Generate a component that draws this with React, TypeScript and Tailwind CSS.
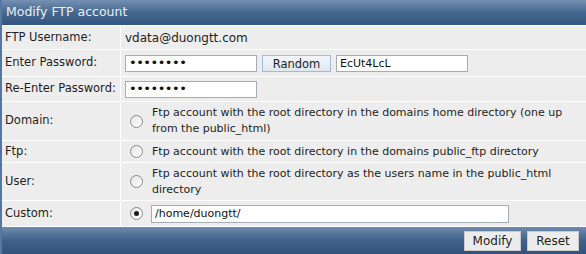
import { useState } from 'react';

const ROOT_OPTIONS = [
  {
    id: 'domain',
    label: 'Domain:',
    text: 'Ftp account with the root directory in the domains home directory (one up from the public_html)',
    height: 'h-[38px]',
  },
  {
    id: 'ftp',
    label: 'Ftp:',
    text: 'Ftp account with the root directory in the domains public_ftp directory',
    height: 'h-[21px]',
  },
  {
    id: 'user',
    label: 'User:',
    text: 'Ftp account with the root directory as the users name in the public_html directory',
    height: 'h-[37px]',
  },
];

function Radio({ checked, onClick }: { checked: boolean; onClick: () => void }) {
  return (
    <button
      type="button"
      onClick={onClick}
      className="w-[13px] h-[13px] shrink-0 rounded-full border border-[#8a8a8a] bg-gradient-to-br from-[#e4e4e4] to-white flex items-center justify-center"
    >
      {checked && <span className="w-[5px] h-[5px] rounded-full bg-[#1a1a1a]" />}
    </button>
  );
}

export default function App() {
  const [root, setRoot] = useState('custom');
  const [customPath, setCustomPath] = useState('/home/duongtt/');
  const [randomPass, setRandomPass] = useState('EcUt4LcL');

  const inputCls =
    'h-[17px] border border-[#a5acb5] bg-white px-[3px] text-[11px] text-[#111] outline-none';

  return (
    <div className="w-[586px] h-[254px] bg-white font-['Tahoma','DejaVu_Sans',sans-serif] text-[11px] text-[#1e1e1e] border-l-2 border-[#56779e] flex flex-col overflow-hidden">
      {/* Header */}
      <div className="h-[25px] shrink-0 bg-gradient-to-b from-[#7590b2] via-[#46688f] to-[#33557f] text-[#e9eff6] text-[12.5px] pl-[4px] flex items-center">
        Modify FTP account
      </div>

      <div className="flex flex-col gap-px pt-px">
        <div className="grid grid-cols-[118px_1fr] gap-px h-[23px]">
          <div className="bg-[#ededed] pl-[3px] flex items-center text-[11.5px]">FTP Username:</div>
          <div className="bg-[#ededed] pl-[4px] flex items-center text-[12px]">vdata@duongtt.com</div>
        </div>

        <div className="grid grid-cols-[118px_1fr] gap-px h-[26px]">
          <div className="bg-[#ededed] pl-[3px] flex items-center text-[11.5px]">Enter Password:</div>
          <div className="bg-[#ededed] pl-[4px] flex items-center">
            <input type="password" defaultValue="12345678" className={`${inputCls} w-[132px] text-[13px] tracking-[-0.5px]`} />
            <button
              type="button"
              onClick={() => setRandomPass(Math.random().toString(36).slice(2, 10))}
              className="ml-[5px] h-[17px] w-[69px] border border-[#9fbbd8] bg-gradient-to-b from-[#f2f6fa] to-[#dfe8f1] text-[11.5px] text-[#1e1e1e]"
            >
              Random
            </button>
            <input
              value={randomPass}
              onChange={(e) => setRandomPass(e.target.value)}
              className={`${inputCls} ml-[5px] w-[132px]`}
            />
          </div>
        </div>

        <div className="grid grid-cols-[118px_1fr] gap-px h-[24px]">
          <div className="bg-[#ededed] pl-[3px] flex items-center text-[11.5px]">Re-Enter Password:</div>
          <div className="bg-[#ededed] pl-[4px] flex items-center">
            <input type="password" defaultValue="12345678" className={`${inputCls} w-[132px] text-[13px] tracking-[-0.5px]`} />
          </div>
        </div>

        {ROOT_OPTIONS.map((opt) => (
          <div key={opt.id} className={`grid grid-cols-[118px_1fr] gap-px ${opt.height}`}>
            <div className="bg-[#ededed] pl-[3px] flex items-center text-[11.5px]">{opt.label}</div>
            <div className="bg-[#ededed] pl-[9px] flex items-center gap-[9px]">
              <Radio checked={root === opt.id} onClick={() => setRoot(opt.id)} />
              <span className="leading-[16px] pr-[8px]">{opt.text}</span>
            </div>
          </div>
        ))}

        <div className="grid grid-cols-[118px_1fr] gap-px h-[25px]">
          <div className="bg-[#ededed] pl-[3px] flex items-center text-[11.5px]">Custom:</div>
          <div className="bg-[#ededed] pl-[9px] flex items-center gap-[8px]">
            <Radio checked={root === 'custom'} onClick={() => setRoot('custom')} />
            <input
              value={customPath}
              onChange={(e) => setCustomPath(e.target.value)}
              className={`${inputCls} w-[358px] h-[18px] text-[11.5px]`}
            />
          </div>
        </div>
      </div>

      {/* Footer */}
      <div className="mt-px flex-1 bg-gradient-to-b from-[#6f8bae] via-[#3f618a] to-[#30527c] flex items-center justify-end gap-[6px] pr-[7px]">
        <button type="button" className="h-[20px] w-[57px] border border-[#c9c9c9] bg-[#ececec] text-[12px] text-[#1e1e1e]">
          Modify
        </button>
        <button type="button" className="h-[20px] w-[52px] border border-[#c9c9c9] bg-[#ececec] text-[12px] text-[#1e1e1e]">
          Reset
        </button>
      </div>
    </div>
  );
}
